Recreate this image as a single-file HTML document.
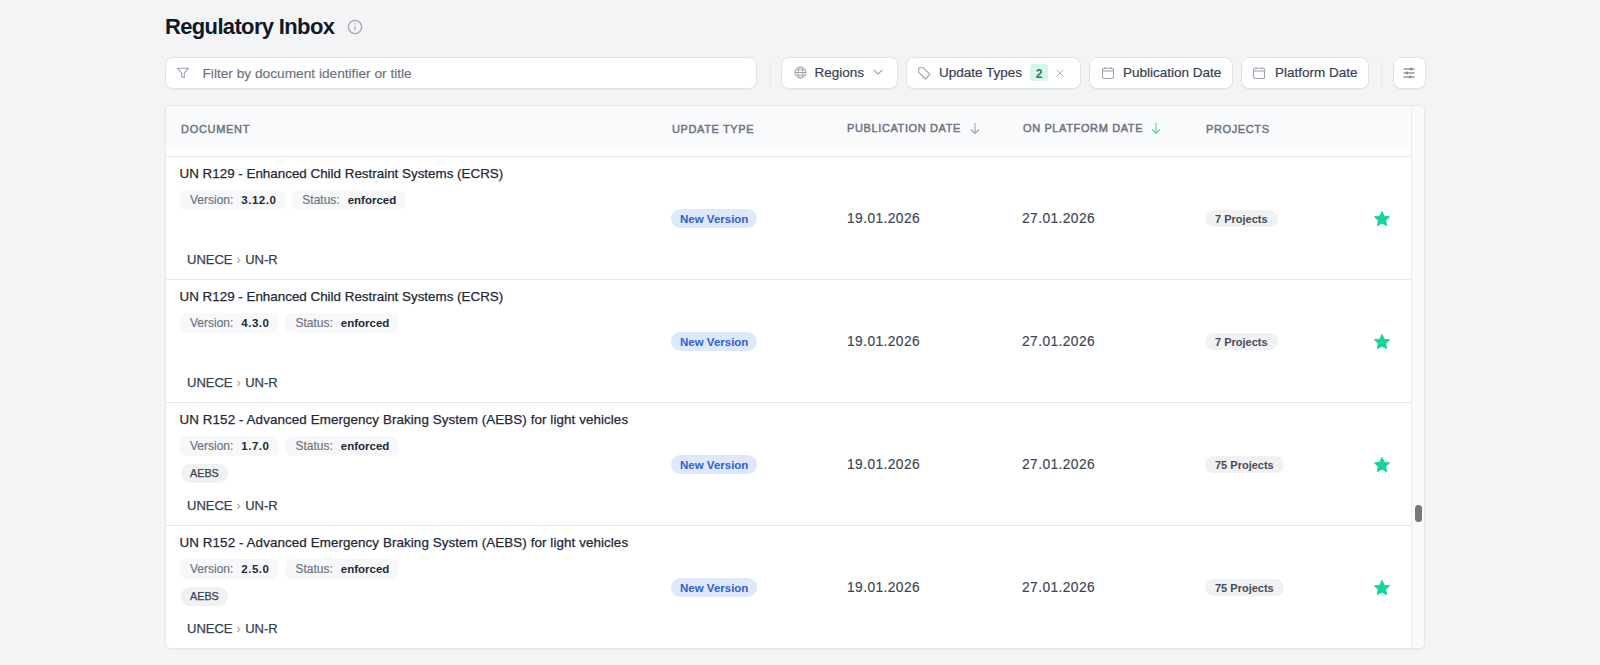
<!DOCTYPE html>
<html><head><meta charset="utf-8">
<style>
*{box-sizing:border-box;margin:0;padding:0}
html,body{width:1600px;height:665px;overflow:hidden;background:#f3f4f6;font-family:"Liberation Sans",sans-serif;color:#374151}
.abs{position:absolute}
.title{left:165px;top:13px;font-size:22px;font-weight:bold;color:#111827;letter-spacing:-0.65px;line-height:28px;white-space:nowrap}
.info{left:347px;top:19px;width:16px;height:16px}
.search{left:165px;top:57px;width:592px;height:32px;background:#fff;border:1px solid #e2e4e8;border-radius:8px;box-shadow:0 1px 1px rgba(0,0,0,0.04)}
.ph{left:202.5px;top:65.5px;font-size:13.7px;color:#6b7280;-webkit-text-stroke:0.15px #6b7280;line-height:16px;white-space:nowrap}
.vdiv{width:1px;background:#eaebee}
.btn{top:57px;height:32px;background:#fff;border:1px solid #e2e4e8;border-radius:8px;box-shadow:0 1px 1px rgba(0,0,0,0.04)}
.btxt{top:65px;font-size:13.5px;color:#374151;-webkit-text-stroke:0.2px #374151;line-height:16px;white-space:nowrap}
.card{left:165px;top:105px;width:1260px;height:544px;background:#fff;border:1px solid #e5e7eb;border-radius:6px;overflow:hidden;box-shadow:0 1px 2px rgba(0,0,0,0.04)}
.hdr{left:0;top:0;width:1245px;height:45px;background:#f9fafb}
.hline{left:0;width:1245px;height:1px;background:#e8e9ec}
.track{left:1245px;top:0;width:14px;height:542px;background:#fafafa;border-left:1px solid #ececee}
.hl{font-size:11px;font-weight:normal;-webkit-text-stroke:0.45px #6b7280;color:#6b7280;letter-spacing:0.62px;line-height:13px;white-space:nowrap}
.row{left:0;width:1245px;height:122px}
.dtitle{left:13.5px;top:9px;font-size:13.4px;color:#1f2937;-webkit-text-stroke:0.25px #1f2937;line-height:16px;white-space:nowrap;font-weight:500}
.pills{left:14px;top:33px;display:flex;gap:6px}
.pill{height:20px;background:#f7f8f9;border-radius:7px;white-space:nowrap;font-size:12px;line-height:20px;padding:0 10px}
.pill .k{color:#6b7280;-webkit-text-stroke:0.15px #6b7280}
.pill .v{color:#1f2937;font-weight:bold;margin-left:8px;font-size:11.5px}
.pill .vn{letter-spacing:0.5px}
.tag{left:14.5px;top:60.5px;height:19px;background:#f0f1f3;border-radius:9px;font-size:10.8px;line-height:19px;padding:0 9.5px;-webkit-text-stroke:0.25px #374151;color:#374151;white-space:nowrap}
.crumb{left:21px;top:95px;font-size:13px;line-height:16px;color:#374151;-webkit-text-stroke:0.25px #374151;white-space:nowrap}
.crumb .sep{color:#a0a5ad;font-size:12.5px;margin:0 4.5px 0 4px;-webkit-text-stroke:0.1px #a0a5ad;position:relative;top:-0.5px}
.nv{left:505px;top:52px;height:19px;border-radius:10px;background:#dde9fb;color:#3060d0;font-size:11.5px;font-weight:bold;line-height:20px;padding:0 9px;white-space:nowrap}
.date{top:54px;font-size:13.8px;letter-spacing:0.4px;color:#3d4451;-webkit-text-stroke:0.15px #3d4451;line-height:16px;white-space:nowrap}
.proj{left:1039px;top:53px;height:17px;border-radius:9px;background:#f0f1f3;color:#454b57;font-size:11px;font-weight:bold;line-height:18px;padding:0 10px;white-space:nowrap}
.star{left:1206.5px;top:53px;width:18px;height:18px}
.thumb{left:1249px;top:399px;width:7px;height:17px;border-radius:4px;background:#777}
</style></head>
<body>
<div class="abs title">Regulatory Inbox</div>
<svg class="abs info" viewBox="0 0 16 16"><circle cx="8" cy="8" r="6.6" fill="none" stroke="#a3a7ae" stroke-width="1.3"/><line x1="8" y1="7.2" x2="8" y2="11.2" stroke="#a3a7ae" stroke-width="1.3"/><circle cx="8" cy="5" r="0.8" fill="#a3a7ae"/></svg>

<div class="abs search"></div>
<svg class="abs" style="left:176px;top:66px" width="14" height="14" viewBox="0 0 14 14"><path d="M1.5 2.2h11l-4.2 5v4.6l-2.6-1.2V7.2z" fill="none" stroke="#9ca3af" stroke-width="1.1" stroke-linejoin="round"/></svg>
<div class="abs ph">Filter by document identifier or title</div>

<div class="abs vdiv" style="left:770px;top:60px;height:28px"></div>

<!-- Regions -->
<div class="abs btn" style="left:781px;width:117px"></div>
<svg class="abs" style="left:794px;top:66px" width="13" height="13" viewBox="0 0 13 13"><g fill="none" stroke="#9ca3af" stroke-width="1"><circle cx="6.5" cy="6.5" r="5.5"/><ellipse cx="6.5" cy="6.5" rx="2.4" ry="5.5"/><line x1="1" y1="6.5" x2="12" y2="6.5"/><path d="M2 3.8h9M2 9.2h9"/></g></svg>
<div class="abs btxt" style="left:814.5px">Regions</div>
<svg class="abs" style="left:872px;top:68px" width="12" height="8" viewBox="0 0 12 8"><path d="M1.5 1.8l4.5 4.2 4.5-4.2" fill="none" stroke="#9ca3af" stroke-width="1.1"/></svg>

<!-- Update Types -->
<div class="abs btn" style="left:906px;width:175px"></div>
<svg class="abs" style="left:917px;top:66px" width="15" height="14" viewBox="0 0 15 14"><path d="M1.8 2.2v4.2l6.6 6.6 4.6-4.6-6.6-6.6H2.2z" fill="none" stroke="#9ca3af" stroke-width="1.1" stroke-linejoin="round"/></svg>
<div class="abs btxt" style="left:939px">Update Types</div>
<div class="abs" style="left:1030px;top:64px;width:18px;height:17px;background:#d4f6eb;border-radius:3px;color:#1a7f5e;font-size:12px;line-height:20px;text-align:center;font-weight:bold">2</div>
<svg class="abs" style="left:1055px;top:68px" width="10" height="10" viewBox="0 0 10 10"><path d="M1.8 1.8l6.6 6.6M8.4 1.8l-6.6 6.6" stroke="#b0b4ba" stroke-width="1"/></svg>

<!-- Publication Date -->
<div class="abs btn" style="left:1089px;width:144px"></div>
<svg class="abs" style="left:1101px;top:66px" width="14" height="14" viewBox="0 0 14 14"><g fill="none" stroke="#9ca3af" stroke-width="1.1"><rect x="1.5" y="2.2" width="11" height="10.3" rx="1.5"/><line x1="1.5" y1="5" x2="12.5" y2="5"/><line x1="4" y1="1" x2="4" y2="2.5"/><line x1="10" y1="1" x2="10" y2="2.5"/></g></svg>
<div class="abs btxt" style="left:1123px">Publication Date</div>

<!-- Platform Date -->
<div class="abs btn" style="left:1241px;width:128px"></div>
<svg class="abs" style="left:1252px;top:66px" width="14" height="14" viewBox="0 0 14 14"><g fill="none" stroke="#9ca3af" stroke-width="1.1"><rect x="1.5" y="2.2" width="11" height="10.3" rx="1.5"/><line x1="1.5" y1="5" x2="12.5" y2="5"/><line x1="4" y1="1" x2="4" y2="2.5"/><line x1="10" y1="1" x2="10" y2="2.5"/></g></svg>
<div class="abs btxt" style="left:1275px">Platform Date</div>

<div class="abs vdiv" style="left:1381px;top:60px;height:28px"></div>

<!-- sliders -->
<div class="abs btn" style="left:1393px;width:33px"></div>
<svg class="abs" style="left:1402px;top:66px" width="14" height="14" viewBox="0 0 14 14"><g stroke="#6b7280" stroke-width="1.1" fill="none"><line x1="1.5" y1="3" x2="12.5" y2="3"/><line x1="1.5" y1="7" x2="12.5" y2="7"/><line x1="1.5" y1="11" x2="12.5" y2="11"/><line x1="9" y1="1.5" x2="9" y2="4.5"/><line x1="5" y1="5.5" x2="5" y2="8.5"/><line x1="8" y1="9.5" x2="8" y2="12.5"/></g></svg>

<!-- CARD -->
<div class="abs card">
  <div class="abs hdr"></div>
  <div class="abs hline" style="top:50px"></div>
  <div class="abs hl" style="left:15px;top:17px;letter-spacing:0.7px">DOCUMENT</div>
  <div class="abs hl" style="left:506px;top:17px">UPDATE TYPE</div>
  <div class="abs hl" style="left:681px;top:16px">PUBLICATION DATE</div>
  <svg class="abs" style="left:803px;top:16px" width="12" height="13" viewBox="0 0 12 13"><path d="M6 1v10.5M2 7.5l4 4 4-4" fill="none" stroke="#9ca3af" stroke-width="1.1"/></svg>
  <div class="abs hl" style="left:857px;top:16px">ON PLATFORM DATE</div>
  <svg class="abs" style="left:984px;top:16px" width="12" height="13" viewBox="0 0 12 13"><path d="M6 1v10.5M2 7.5l4 4 4-4" fill="none" stroke="#4fd8aa" stroke-width="1.1"/></svg>
  <div class="abs hl" style="left:1040px;top:17px">PROJECTS</div>

  <div class="abs track"></div>
  <div class="abs thumb"></div>

  <!--ROWS-->
  <div class="abs row" style="top:51px">
  <div class="abs dtitle">UN R129 - Enhanced Child Restraint Systems (ECRS)</div>
  <div class="abs pills"><div class="pill"><span class="k">Version:</span><span class="v vn">3.12.0</span></div><div class="pill"><span class="k">Status:</span><span class="v">enforced</span></div></div>
  <div class="abs crumb">UNECE<span class="sep">›</span>UN-R</div>
  <div class="abs nv">New Version</div>
  <div class="abs date" style="left:681px">19.01.2026</div>
  <div class="abs date" style="left:856px">27.01.2026</div>
  <div class="abs proj">7 Projects</div>
  <svg class="abs star" viewBox="0 0 16 16"><path d="M8 1.2l2.05 4.3 4.7.6-3.45 3.25.9 4.65L8 11.7l-4.2 2.3.9-4.65L1.25 6.1l4.7-.6z" fill="#17d3a0" stroke="#17d3a0" stroke-width="0.8" stroke-linejoin="round"/></svg>
  </div>
  <div class="abs hline" style="top:173px"></div>
  <div class="abs row" style="top:174px">
  <div class="abs dtitle">UN R129 - Enhanced Child Restraint Systems (ECRS)</div>
  <div class="abs pills"><div class="pill"><span class="k">Version:</span><span class="v vn">4.3.0</span></div><div class="pill"><span class="k">Status:</span><span class="v">enforced</span></div></div>
  <div class="abs crumb">UNECE<span class="sep">›</span>UN-R</div>
  <div class="abs nv">New Version</div>
  <div class="abs date" style="left:681px">19.01.2026</div>
  <div class="abs date" style="left:856px">27.01.2026</div>
  <div class="abs proj">7 Projects</div>
  <svg class="abs star" viewBox="0 0 16 16"><path d="M8 1.2l2.05 4.3 4.7.6-3.45 3.25.9 4.65L8 11.7l-4.2 2.3.9-4.65L1.25 6.1l4.7-.6z" fill="#17d3a0" stroke="#17d3a0" stroke-width="0.8" stroke-linejoin="round"/></svg>
  </div>
  <div class="abs hline" style="top:296px"></div>
  <div class="abs row" style="top:297px">
  <div class="abs dtitle" style="letter-spacing:0.085px">UN R152 - Advanced Emergency Braking System (AEBS) for light vehicles</div>
  <div class="abs pills"><div class="pill"><span class="k">Version:</span><span class="v vn">1.7.0</span></div><div class="pill"><span class="k">Status:</span><span class="v">enforced</span></div></div>
  <div class="abs tag">AEBS</div>
  <div class="abs crumb">UNECE<span class="sep">›</span>UN-R</div>
  <div class="abs nv">New Version</div>
  <div class="abs date" style="left:681px">19.01.2026</div>
  <div class="abs date" style="left:856px">27.01.2026</div>
  <div class="abs proj">75 Projects</div>
  <svg class="abs star" viewBox="0 0 16 16"><path d="M8 1.2l2.05 4.3 4.7.6-3.45 3.25.9 4.65L8 11.7l-4.2 2.3.9-4.65L1.25 6.1l4.7-.6z" fill="#17d3a0" stroke="#17d3a0" stroke-width="0.8" stroke-linejoin="round"/></svg>
  </div>
  <div class="abs hline" style="top:419px"></div>
  <div class="abs row" style="top:420px">
  <div class="abs dtitle" style="letter-spacing:0.085px">UN R152 - Advanced Emergency Braking System (AEBS) for light vehicles</div>
  <div class="abs pills"><div class="pill"><span class="k">Version:</span><span class="v vn">2.5.0</span></div><div class="pill"><span class="k">Status:</span><span class="v">enforced</span></div></div>
  <div class="abs tag">AEBS</div>
  <div class="abs crumb">UNECE<span class="sep">›</span>UN-R</div>
  <div class="abs nv">New Version</div>
  <div class="abs date" style="left:681px">19.01.2026</div>
  <div class="abs date" style="left:856px">27.01.2026</div>
  <div class="abs proj">75 Projects</div>
  <svg class="abs star" viewBox="0 0 16 16"><path d="M8 1.2l2.05 4.3 4.7.6-3.45 3.25.9 4.65L8 11.7l-4.2 2.3.9-4.65L1.25 6.1l4.7-.6z" fill="#17d3a0" stroke="#17d3a0" stroke-width="0.8" stroke-linejoin="round"/></svg>
  </div>
  <!--/ROWS-->
</div>
</body></html>
